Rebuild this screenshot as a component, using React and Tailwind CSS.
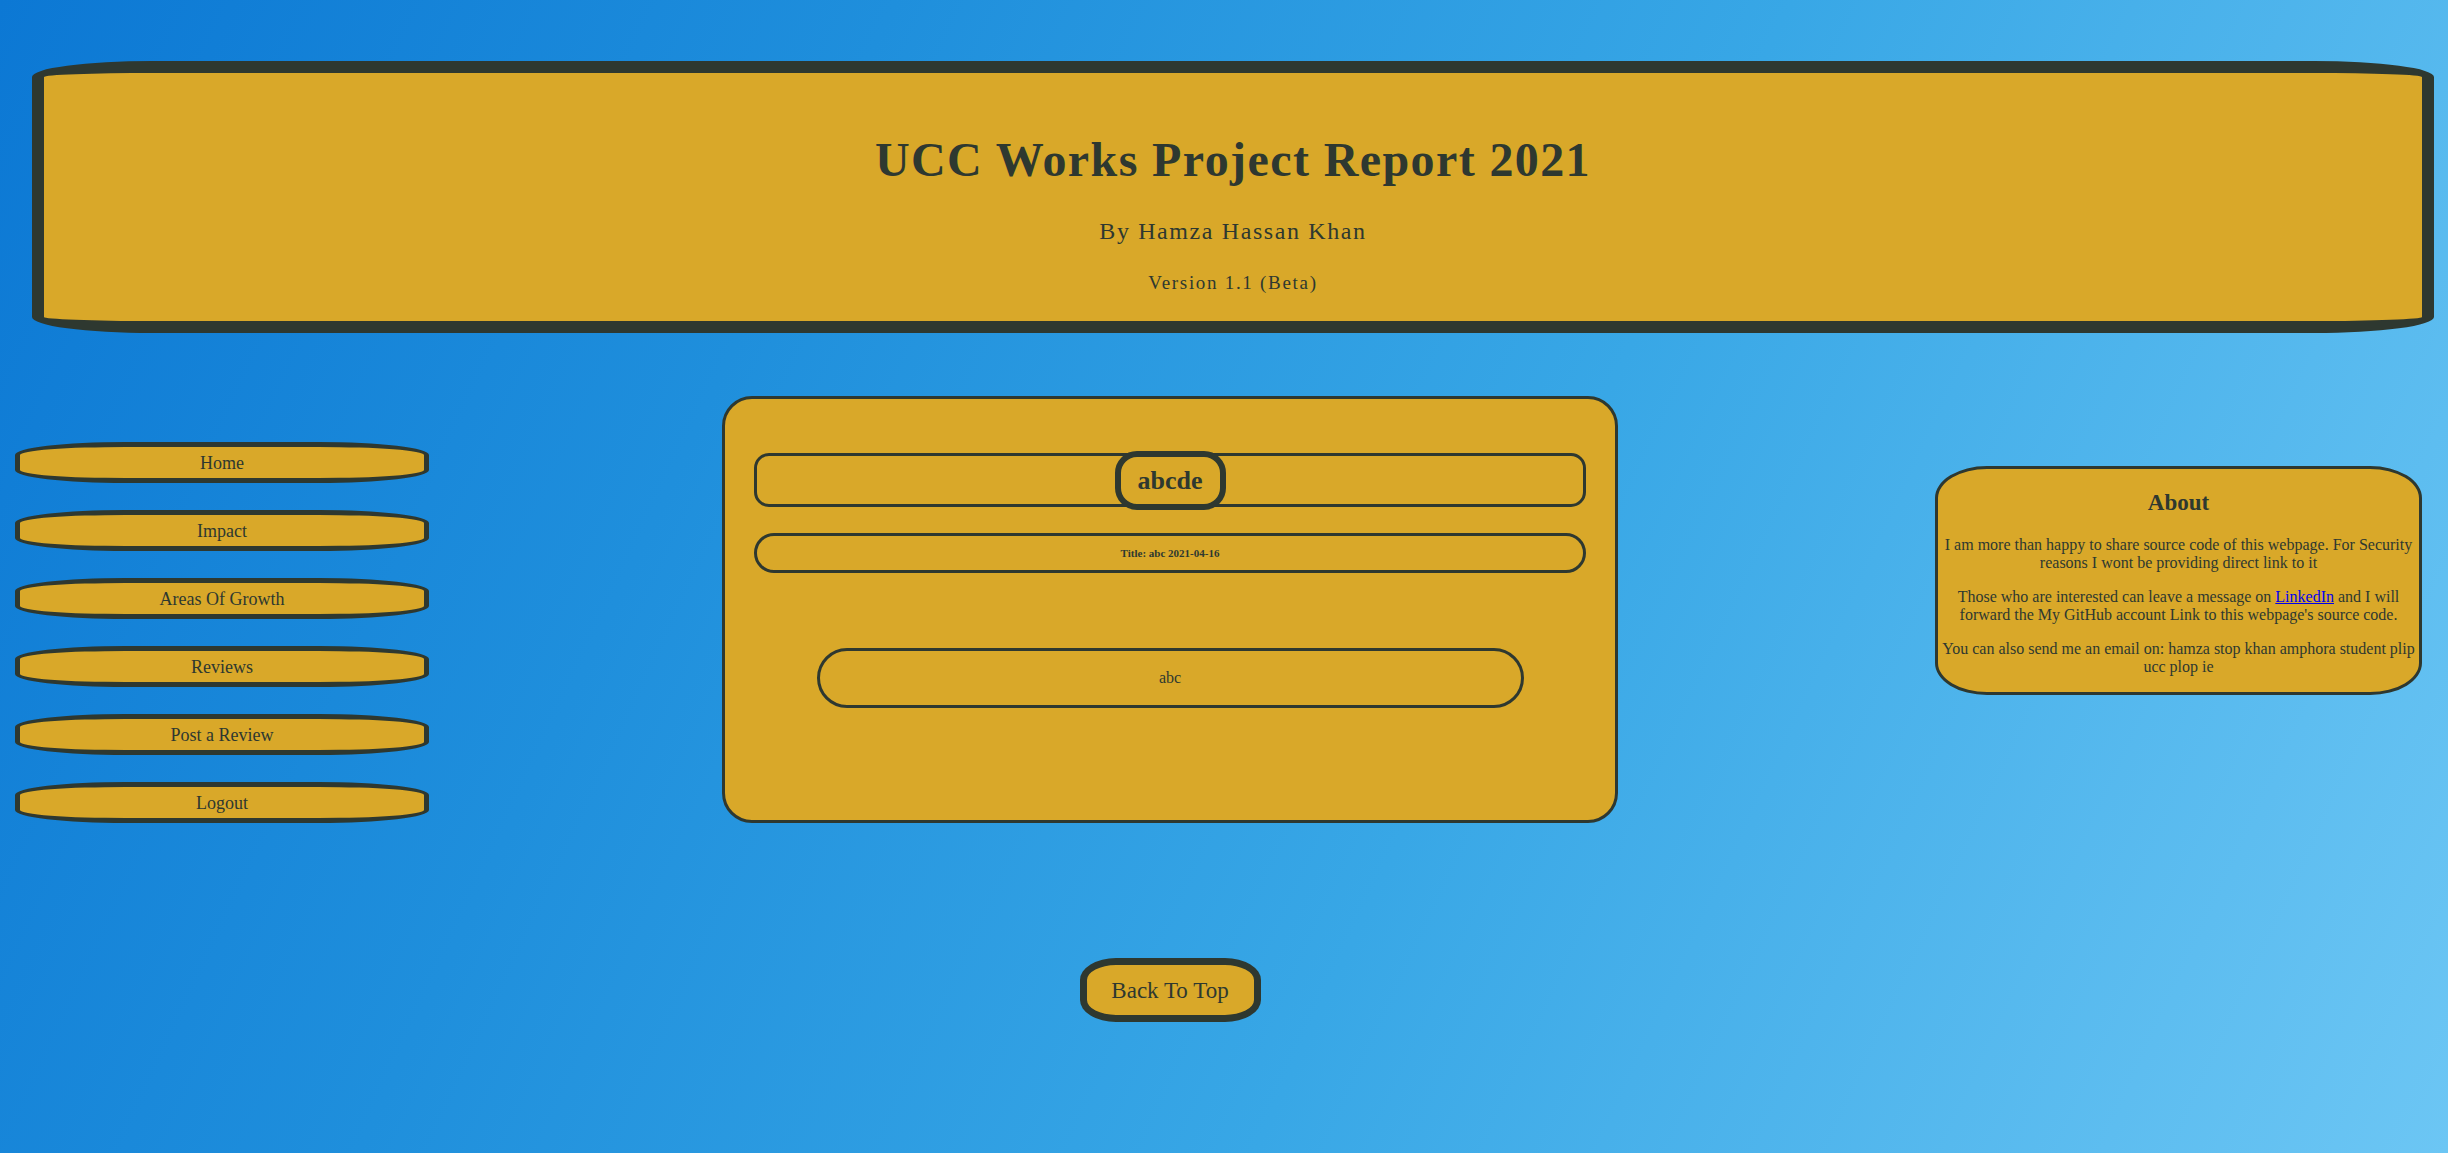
import React from "react";

const navItems = ["Home", "Impact", "Areas Of Growth", "Reviews", "Post a Review", "Logout"];

const App = () => {
  return (
    <div
      className="min-h-screen bg-[linear-gradient(115deg,#0c78d4_0%,#1f8fdc_30%,#38a7e6_60%,#6cc6f4_100%)] text-[#2e3830] pt-[61px] pb-[131px]"
      style={{ fontFamily: '"Liberation Serif", "Times New Roman", serif' }}
    >
      {/* Header */}
      <header className="ml-[32px] mr-[14px] h-[272px] bg-[#d9a829] border-[12px] border-[#2e3830] rounded-[120px/16px] text-center pt-[59px]">
        <h1 className="text-[48px] font-bold leading-[56px] tracking-[1.4px]">
          UCC Works Project Report 2021
        </h1>
        <p className="text-[24px] leading-[28px] tracking-[1.6px] mt-[29px]">
          By Hamza Hassan Khan
        </p>
        <p className="text-[19px] leading-[22px] tracking-[1.7px] mt-[27px]">
          Version 1.1 (Beta)
        </p>
      </header>

      {/* Main row */}
      <div className="flex items-start mt-[63px] pl-[15px]">

        {/* Nav */}
        <nav className="w-[414px] mt-[46px] flex flex-col gap-[27px]">
          {navItems.map((item) => (
            <button
              key={item}
              className="h-[41px] w-full bg-[#d9a829] border-[5px] border-[#2e3830] rounded-[110px/13px] text-[18px] leading-none"
            >
              {item}
            </button>
          ))}
        </nav>

        {/* Center */}
        <div className="w-[896px] ml-[293px] flex flex-col items-center">
          <div className="w-full h-[427px] bg-[#d9a829] border-[3px] border-[#2e3830] rounded-[30px] pt-[54px] px-[29px]">
            <div className="h-[54px] border-[3px] border-[#2e3830] rounded-[15px] flex items-center justify-center">
              <div className="h-[59px] w-[111px] shrink-0 border-[6px] border-[#2e3830] rounded-[22px] bg-[#d9a829] flex items-center justify-center text-[26px] font-bold">
                abcde
              </div>
            </div>
            <div className="h-[40px] mt-[26px] border-[3px] border-[#2e3830] rounded-[20px] flex items-center justify-center text-[11px] font-bold">
              Title: abc 2021-04-16
            </div>
            <div className="h-[60px] w-[707px] mx-auto mt-[75px] border-[3px] border-[#2e3830] rounded-[30px] flex items-center justify-center text-[16px]">
              abc
            </div>
          </div>

          <button className="mt-[135px] w-[181px] h-[64px] bg-[#d9a829] border-[7px] border-[#2e3830] rounded-[36px/22px] text-[23px] leading-none">
            Back To Top
          </button>
        </div>

        {/* About */}
        <aside className="w-[487px] ml-[317px] mt-[70px] bg-[#d9a829] border-[3px] border-[#2e3830] rounded-[52px/32px] px-[4px] pt-[20px] pb-[16px] text-center">
          <h2 className="text-[23px] font-bold leading-[28px]">About</h2>
          <p className="text-[16px] leading-[18px] mt-[19px]">
            I am more than happy to share source code of this webpage. For Security reasons I wont be providing direct link to it
          </p>
          <p className="text-[16px] leading-[18px] mt-[16px]">
            Those who are interested can leave a message on{" "}
            <a href="#" className="text-[#0000ee] underline">LinkedIn</a>{" "}
            and I will forward the My GitHub account Link to this webpage's source code.
          </p>
          <p className="text-[16px] leading-[18px] mt-[16px]">
            You can also send me an email on: hamza stop khan amphora student plip ucc plop ie
          </p>
        </aside>

      </div>
    </div>
  );
};

export default App;
